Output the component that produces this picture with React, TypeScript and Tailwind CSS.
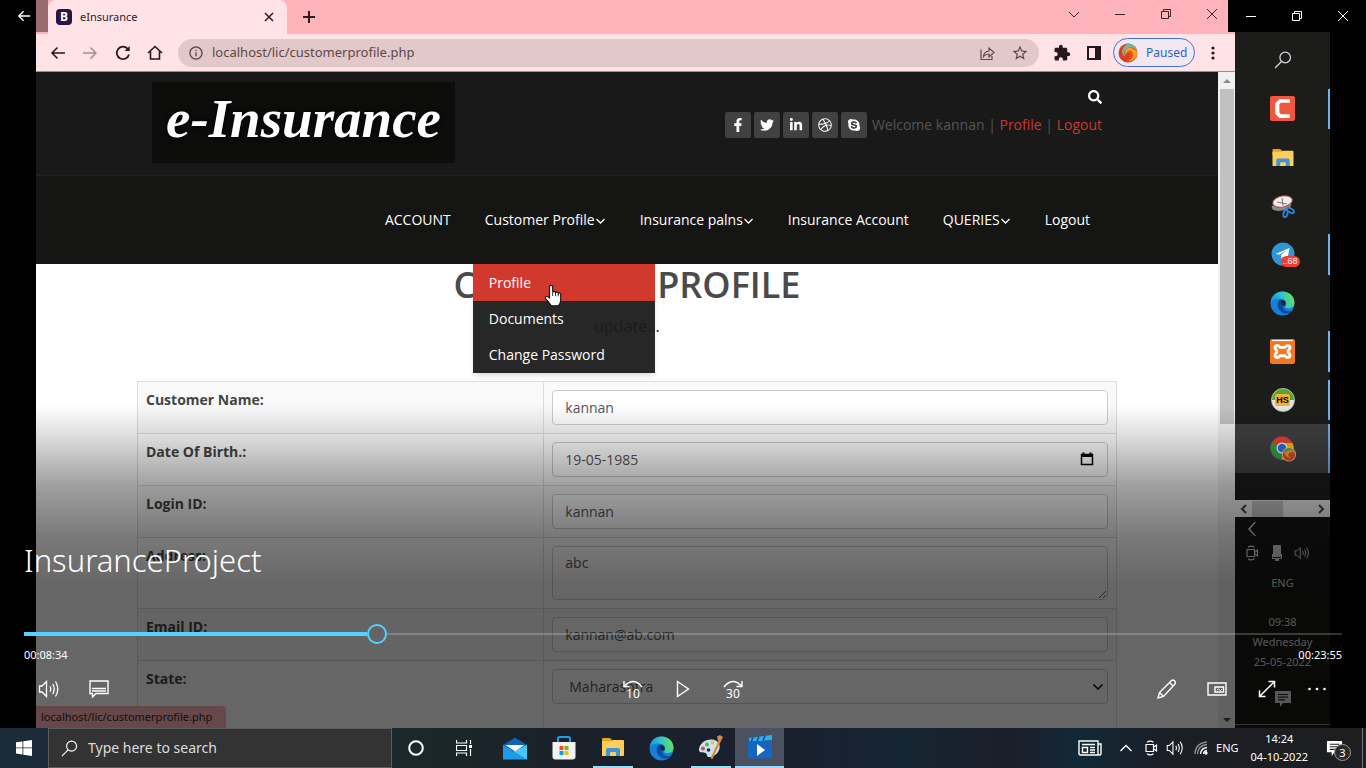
import React, { useState } from "react";
import {
  FaDribbble,
  FaFacebookF,
  FaLinkedinIn,
  FaSearch,
  FaSkype,
  FaTwitter,
} from "react-icons/fa";
import { MdExtension, MdInfoOutline, MdStarBorder } from "react-icons/md";

type IconProps = { className?: string };

function Svg({
  className = "size-5",
  box = "0 0 24 24",
  children,
  width = 1.5,
}: {
  className?: string;
  box?: string;
  width?: number;
  children: React.ReactNode;
}) {
  return (
    <svg className={className} viewBox={box} fill="none" stroke="currentColor" strokeWidth={width} aria-hidden="true">
      {children}
    </svg>
  );
}

/* ---------- shared drawings ---------- */

const ArrowBack = ({ className }: IconProps) => (
  <Svg className={className} box="0 0 16 16">
    <path d="M15 8H2M7.500 2.500L2 8l5.500 5.500" />
  </Svg>
);

const Restore = ({ className }: IconProps) => (
  <Svg className={className} box="0 0 12 12" width={1}>
    <path d="M1.500 3.500h7v7h-7zM3.500 3.500v-2h7v7h-2" />
  </Svg>
);

const Close = ({ className }: IconProps) => (
  <Svg className={className} box="0 0 12 12" width={1}>
    <path d="M1 1l10 10M11 1L1 11" />
  </Svg>
);

const Minimise = ({ className }: IconProps) => (
  <Svg className={className} box="0 0 12 12" width={1}>
    <path d="M1 6.500h10" />
  </Svg>
);

const Lens = ({ className }: IconProps) => (
  <Svg className={className} box="0 0 18 18" width={1.2}>
    <circle cx="11.200" cy="6.500" r="5.300" />
    <path d="M7.500 10.500L1 17" />
  </Svg>
);

const MenuChevron = () => (
  <Svg className="mt-0.5 h-2.5 w-[11px]" box="0 0 11 10" width={1.3}>
    <path d="M1.500 3l4 4 4-4" />
  </Svg>
);

const Speaker = ({ className }: IconProps) => (
  <Svg className={className} box="0 0 22 18" width={1.3}>
    <path d="M1.500 6v6H4l4.500 4.500v-15L4 6zM12 6.200q1.500 2.800 0 5.600M14.800 4q2.800 5 0 10M17.500 1.500q4.600 7.500 0 15" />
  </Svg>
);

const MeetCam = ({ className }: IconProps) => (
  <Svg className={className} box="0 0 14 16" width={1.2}>
    <path d="M2 4.500h7.500v7H2zM9.500 7.200l3-2v5.600l-3-2M3 2.300Q6 0 9.500 2.300M3 13.700Q6 16 9.500 13.700" />
  </Svg>
);

const Folder = ({ className }: IconProps) => (
  <svg className={className} viewBox="0 0 24 22" aria-hidden="true">
    <path d="M1 3q0-1 1-1h7l2 2v4H1z" fill="#e8a317" />
    <path d="M1 5h9l2-1h10q1 0 1 1v14q0 1-1 1H1z" fill="#fccf5c" />
    <path d="M5 20v-6q0-2 2-2h10q2 0 2 2v6h-4v-3q0-1-1-1h-4q-1 0-1 1v3z" fill="#3c93dd" />
  </svg>
);

const Edge = ({ className }: IconProps) => (
  <svg className={className} viewBox="0 0 24 24" aria-hidden="true">
    <defs>
      <linearGradient id="edgeTop" x1="0" y1="0.600" x2="1" y2="0.400">
        <stop offset="0" stopColor="#1b8fdc" />
        <stop offset="0.500" stopColor="#2cc5d2" />
        <stop offset="1" stopColor="#6fe04b" />
      </linearGradient>
    </defs>
    <circle cx="12" cy="12" r="11.500" fill="#1a7fd4" />
    <path d="M.6 11C1.400 4.500 6 .5 12 .5c7 0 11.500 5 11.500 10.500 0 3.500-2.600 5.500-6 5.500-2.800 0-3.600-1.200-2.800-2.400C16.500 10 13 7.200 9 7.200 4.800 7.200 1.500 9 .6 11z" fill="url(#edgeTop)" />
    <path d="M9.500 8.500c-3.500 3-3 10 3 12.500 3 1.200 6.500.6 9-2-3.500 1.200-7.500.2-8.700-3-.8-2 .2-3.200.8-4.200.4-1.800-1.500-3.800-4.100-3.300z" fill="#0b4aa0" />
    <path d="M14.700 14.100c1.500-3-.2-5-2.700-5.900-1 .8-1.400 2.300-.7 4 .6 1.600 1.900 2.300 3.400 1.900z" fill="#16283c" />
  </svg>
);

const Swirl = ({ className }: IconProps) => (
  <svg className={className} viewBox="0 0 20 20" aria-hidden="true">
    <circle cx="10" cy="10" r="9.500" fill="#d9411e" />
    <path d="M10 .5a9.500 9.500 0 0 1 9.400 8C17 4 11 3 7.500 6.500 5.500 9 6 12 8 13.500 3 13 2 5 10 .5z" fill="#6fb8a0" />
    <path d="M19.400 9c0 6-5 10-10 9 4-1 6-4 4.500-7S8 9 8 12C5 8 9 3.500 13.500 5q4 1.500 5.900 4z" fill="#f6a21c" />
    <path d="M10 8c3-1 6 1 5 5-1 3-4 5-6 5 3-2 4.500-5 3-7-1-1.200-2.500-1-4 .5Q8.500 9 10 8z" fill="#f04b23" />
  </svg>
);

const Note = ({ className }: IconProps) => (
  <svg className={className} viewBox="0 0 18 18" aria-hidden="true">
    <path d="M1 1h16v12H9l-3 4v-4H1z" fill="currentColor" />
    <path d="M4 4.500h10M4 7.200h10M4 9.900h7" stroke="#222" strokeWidth="1.200" />
  </svg>
);

/* ---------- browser ---------- */

function TabStrip() {
  return (
    <div className="flex h-[34px] shrink-0 items-stretch bg-[#ffb3ba] pl-3 text-[#2d1b1d]">
      <div className="flex w-[239px] items-center rounded-t-lg bg-[#ffe3e6] pr-2.5 pl-2">
        <span className="flex size-4 items-center justify-center rounded-sm bg-[#2a1740] font-['Open_Sans',sans-serif] text-xs font-bold text-white">
          B
        </span>
        <span className="ml-2 flex-1 text-[11px]">eInsurance</span>
        <button aria-label="Close tab" className="flex size-4 items-center justify-center">
          <Svg className="size-3" box="0 0 12 12" width={1.5}>
            <path d="M2 2l8 8M10 2l-8 8" />
          </Svg>
        </button>
      </div>
      <button aria-label="New tab" className="flex w-11 items-center justify-center">
        <Svg className="size-3.5" box="0 0 14 14" width={2}>
          <path d="M7 1v12M1 7h12" />
        </Svg>
      </button>
      <div className="ml-auto flex h-7 items-center text-[#3c2427]">
        <button aria-label="Search tabs" className="flex w-[46px] justify-center">
          <Svg className="size-3" box="0 0 12 12" width={1}>
            <path d="M1 4l5 5 5-5" />
          </Svg>
        </button>
        <button aria-label="Minimise browser" className="flex w-[46px] justify-center"><Minimise className="size-3" /></button>
        <button aria-label="Restore browser" className="flex w-[46px] justify-center"><Restore className="size-3" /></button>
        <button aria-label="Close browser" className="flex w-[46px] justify-center"><Close className="size-3" /></button>
      </div>
    </div>
  );
}

function Toolbar() {
  return (
    <div className="flex h-[38px] shrink-0 items-center border-b border-[#a08c8f] bg-[#ffe3e6] pr-1 text-[#26191b]">
      <div className="flex w-[142px] items-center justify-between pr-[15px] pl-3.5">
        <button aria-label="Back"><ArrowBack className="size-4" /></button>
        <button aria-label="Forward" className="rotate-180 text-[#a48f92]"><ArrowBack className="size-4" /></button>
        <button aria-label="Reload">
          <Svg className="size-4" box="0 0 16 16" width={1.8}>
            <path d="M14 9.500A6.200 6.200 0 1 1 12.500 3.600L14 5" />
            <path d="M14.700 1v5h-5z" fill="currentColor" stroke="none" />
          </Svg>
        </button>
        <button aria-label="Home">
          <Svg className="size-4" box="0 0 16 16" width={1.6}>
            <path d="M1 8l7-6.500L15 8M3.500 6.500V14h9V6.500" />
          </Svg>
        </button>
      </div>
      <div className="flex h-7 flex-1 items-center rounded-full bg-[#e3c8ca] px-2.5 text-[#5c484b]">
        <MdInfoOutline className="size-4 shrink-0" />
        <input
          aria-label="Address"
          defaultValue="localhost/lic/customerprofile.php"
          className="ml-2 min-w-0 flex-1 bg-transparent text-[13px] outline-none"
        />
        <button aria-label="Share page" className="mr-4">
          <Svg className="size-4" box="0 0 16 16" width={1.2}>
            <path d="M2 4.500V14.500H13V11M4.500 11.500Q5 6.500 10 6V3l5 4.500-5 4.500V9Q6.500 9 4.500 11.500z" />
          </Svg>
        </button>
        <button aria-label="Bookmark"><MdStarBorder className="size-[18px]" /></button>
      </div>
      <button aria-label="Extensions" className="ml-3.5"><MdExtension className="size-[18px]" /></button>
      <button aria-label="Side panel" className="ml-4">
        <Svg className="size-3.5" box="0 0 14 14" width={2}>
          <path d="M1 1h12v12H1z" />
          <path d="M9 1h4v12H9z" fill="currentColor" />
        </Svg>
      </button>
      <button className="ml-3 flex h-[29px] w-[82px] items-center rounded-full border border-[#3f74cf] bg-[#f1e8f3] pl-1 text-xs text-[#2f65bd]">
        <Swirl className="size-5" />
        <span className="ml-2">Paused</span>
      </button>
      <button aria-label="Menu" className="flex w-9 justify-center">
        <svg className="size-4" viewBox="0 0 16 16" fill="currentColor" aria-hidden="true">
          <circle cx="8" cy="3" r="1.600" /><circle cx="8" cy="8" r="1.600" /><circle cx="8" cy="13" r="1.600" />
        </svg>
      </button>
    </div>
  );
}

const social = [
  { name: "Facebook", Icon: FaFacebookF },
  { name: "Twitter", Icon: FaTwitter },
  { name: "LinkedIn", Icon: FaLinkedinIn },
  { name: "Dribbble", Icon: FaDribbble },
  { name: "Skype", Icon: FaSkype },
];

function SiteHeader() {
  return (
    <header className="h-[104px] border-b border-[#222] bg-[#191919]">
      <div className="mx-auto flex w-[950px] max-w-full items-start justify-between pt-2.5">
        <a
          href="#home"
          className="flex h-[81px] w-[303px] items-center justify-center bg-[#0d0d0c] pb-2 font-['Liberation_Serif',serif] text-[55px] leading-none font-bold text-white italic [text-shadow:0_0_6px_#000]"
        >
          e-Insurance
        </a>
        <div className="flex flex-col items-end">
          <button aria-label="Search site" className="mt-2 text-white"><FaSearch className="size-3.5" /></button>
          <div className="mt-2 flex items-center gap-[3px] text-sm text-[#555]">
            {social.map(({ name, Icon }) => (
              <a key={name} href="#social" aria-label={name} className="flex size-[26px] items-center justify-center rounded-xs bg-[#414141] text-white">
                <Icon className="size-3.5" />
              </a>
            ))}
            <span className="ml-0.5">
              Welcome kannan | <a href="#profile" className="text-[#cd3630]">Profile</a> |{" "}
              <a href="#logout" className="text-[#cd3630]">Logout</a>
            </span>
          </div>
        </div>
      </div>
    </header>
  );
}

function HandPointer() {
  return (
    <svg className="absolute top-5 left-[71px] h-6 w-[18px]" viewBox="0 0 18 24" aria-hidden="true">
      <path
        d="M5.500 14V3q0-1.800 1.600-1.800T8.700 3v5.500q.3-1.200 1.500-1.100 1.200.1 1.400 1.300.5-.9 1.500-.7 1.100.2 1.200 1.400.5-.7 1.400-.4 1 .3 1 1.600v5q0 3.500-2.200 6.100H7.300Q5.200 18.300 1.800 14.800q-.9-1.300.2-2 1-.6 2 .1z"
        fill="#fff"
        stroke="#111"
        strokeWidth="1.100"
      />
      <path d="M8.700 8.500V12M11.600 9v3.200M14.300 9.800v2.600" stroke="#111" strokeWidth="0.900" />
    </svg>
  );
}

function SiteNav() {
  return (
    <nav className="h-[88px] bg-[#151514] text-sm text-white">
      <ul className="mx-auto flex h-full w-[950px] max-w-full items-center justify-end gap-[34px] pr-3">
        <li><a href="#account">ACCOUNT</a></li>
        <li className="relative flex h-full items-center">
          <a href="#customer" className="flex items-center">Customer Profile<MenuChevron /></a>
          <ul className="absolute top-full -left-3 z-10 w-[182px] bg-[#1b1b1b]/95 shadow-md">
            <li className="relative flex h-[37px] items-center bg-[#d1382e] px-4">
              <a href="#profile">Profile</a>
              <HandPointer />
            </li>
            <li className="flex h-9 items-center px-4"><a href="#documents">Documents</a></li>
            <li className="flex h-9 items-center px-4"><a href="#password">Change Password</a></li>
          </ul>
        </li>
        <li><a href="#plans" className="flex items-center">Insurance palns<MenuChevron /></a></li>
        <li><a href="#insurance">Insurance Account</a></li>
        <li><a href="#queries" className="flex items-center">QUERIES<MenuChevron /></a></li>
        <li><a href="#logout">Logout</a></li>
      </ul>
    </nav>
  );
}

const field = "block h-[35px] w-full rounded-sm border border-[#ccc] bg-white px-3 text-sm text-[#555] outline-none";

function FormRow({ id, label, shaded, children }: { id: string; label: string; shaded?: boolean; children: React.ReactNode }) {
  return (
    <tr className={shaded ? "bg-[#f9f9f9]" : "bg-white"}>
      <th scope="row" className="w-[41.5%] border border-[#ddd] p-2 text-left align-top text-sm font-bold text-[#444]">
        <label htmlFor={id}>{label}</label>
      </th>
      <td className="border border-[#ddd] p-2 align-top">{children}</td>
    </tr>
  );
}

function CustomerProfile() {
  return (
    <main className="mx-auto w-[980px] max-w-full">
      <h1 className="text-center text-4xl leading-[42px] font-semibold text-[#4a4a4a]">CUSTOMER PROFILE</h1>
      <p className="mt-2.5 mb-[45px] text-center text-base leading-5 text-[#222]">update...</p>
      <table className="w-full border-collapse">
        <tbody>
          <FormRow id="name" label="Customer Name:" shaded>
            <input id="name" defaultValue="kannan" className={field} />
          </FormRow>
          <FormRow id="dob" label="Date Of Birth.:">
            <div className="relative">
              <input id="dob" defaultValue="19-05-1985" className={field} />
              <button aria-label="Choose date" className="absolute top-2.5 right-3.5 text-black">
                <Svg className="size-3.5" box="0 0 14 14" width={1.5}>
                  <path d="M1.500 2.500h11v10h-11z" />
                  <path d="M1.500 4h11M3.500 0.500v2M10.500 0.500v2" strokeWidth="2" />
                </Svg>
              </button>
            </div>
          </FormRow>
          <FormRow id="login" label="Login ID:" shaded>
            <input id="login" defaultValue="kannan" className={field} />
          </FormRow>
          <FormRow id="address" label="Address:">
            <textarea
              id="address"
              defaultValue="abc"
              className="block h-[54px] w-full rounded-sm border border-[#ccc] bg-white px-3 py-1.5 text-sm text-[#555] outline-none"
            />
          </FormRow>
          <FormRow id="email" label="Email ID:" shaded>
            <input id="email" defaultValue="kannan@ab.com" className={field} />
          </FormRow>
          <FormRow id="state" label="State:">
            <div className="relative pb-10">
              <select id="state" className="block h-[35px] w-full appearance-none rounded-sm border border-[#ccc] bg-white px-4 text-sm text-[#555] outline-none">
                <option>Maharashtra</option>
              </select>
              <Svg className="pointer-events-none absolute top-3 right-1 size-3 text-black" box="0 0 12 12">
                <path d="M1.500 3.500L6 8l4.500-4.500" />
              </Svg>
            </div>
          </FormRow>
        </tbody>
      </table>
    </main>
  );
}

function PageScrollbar() {
  return (
    <div className="flex w-[17px] shrink-0 flex-col items-center bg-[#f1f1f1]">
      <svg className="h-[17px] w-2" viewBox="0 0 8 17" aria-hidden="true"><path d="M0 11l4-4 4 4z" fill="#8b8b8b" /></svg>
      <div className="h-[51%] w-[14px] bg-[#c1c1c1]" />
      <svg className="mt-auto h-[17px] w-2" viewBox="0 0 8 17" aria-hidden="true"><path d="M0 7l4 4 4-4z" fill="#444" /></svg>
    </div>
  );
}

function Browser() {
  return (
    <section className="flex min-w-0 flex-1 flex-col">
      <TabStrip />
      <Toolbar />
      <div className="relative flex min-h-0 flex-1">
        <div className="min-w-0 flex-1 overflow-hidden bg-white font-['Open_Sans',sans-serif]">
          <SiteHeader />
          <SiteNav />
          <CustomerProfile />
        </div>
        <PageScrollbar />
        <div className="absolute bottom-0 left-0 rounded-tr-sm bg-[#ffb3ba] pr-3.5 pl-[5px] text-[11px] leading-[22px] text-[#3c2427]">
          localhost/lic/customerprofile.php
        </div>
      </div>
    </section>
  );
}

/* ---------- vertical taskbar inside the video ---------- */

const sideApps: { name: string; open?: boolean; active?: boolean; icon: React.ReactNode }[] = [
  { name: "Search", icon: <Lens className="size-[18px]" /> },
  {
    name: "Camtasia",
    open: true,
    icon: (
      <svg className="size-[25px]" viewBox="0 0 24 24" aria-hidden="true">
        <rect width="24" height="24" rx="2" fill="#f1573f" />
        <path d="M19 3H9L5 7v10l4 4h10v-3.500h-8.500L9 16V8l1.500-1.500H19z" fill="#fff" />
      </svg>
    ),
  },
  { name: "File Explorer", icon: <Folder className="h-[21px] w-6" /> },
  {
    name: "Snipping Tool",
    icon: (
      <svg className="size-6" viewBox="0 0 24 24" aria-hidden="true">
        <ellipse cx="10.500" cy="12" rx="10" ry="4.500" fill="#8b8b8b" transform="rotate(-12 10.500 12)" />
        <ellipse cx="11.500" cy="7.500" rx="10" ry="5.500" fill="#eee" stroke="#b94040" transform="rotate(-12 11.500 7.500)" />
        <path d="M6 8l10 2M11 4l1 8" stroke="#777" />
        <ellipse cx="14.500" cy="19.500" rx="2" ry="3.800" fill="none" stroke="#2f86d8" strokeWidth="1.800" transform="rotate(15 14.500 19.500)" />
        <ellipse cx="19.500" cy="16.500" rx="2" ry="3.800" fill="none" stroke="#2f86d8" strokeWidth="1.800" transform="rotate(-60 19.500 16.500)" />
      </svg>
    ),
  },
  {
    name: "Telegram",
    open: true,
    icon: (
      <span className="relative">
        <svg className="size-6" viewBox="0 0 24 24" aria-hidden="true">
          <circle cx="12" cy="12" r="11.500" fill="#2f96d5" />
          <path d="M4.500 12L18.500 6l-2.200 12-4.300-3.200-2 2v-3.800l6-5-7.500 4.500z" fill="#fff" />
        </svg>
        <span className="absolute top-3.5 left-2.5 rounded-md bg-[#f23c34] px-0.5 font-['Liberation_Sans',sans-serif] text-[9px] leading-[11px] text-white">..68</span>
      </span>
    ),
  },
  { name: "Edge", icon: <Edge className="size-[25px]" /> },
  {
    name: "XAMPP",
    open: true,
    icon: (
      <svg className="size-[25px]" viewBox="0 0 24 24" aria-hidden="true">
        <rect width="24" height="24" rx="2" fill="#f6781d" />
        <path d="M2 1.500h20" stroke="#fff" />
        <g fill="none" stroke="#fff" strokeWidth="2.800" strokeLinejoin="round">
          <path d="M6 10.500Q3.500 8 6 6.500 8 5.500 9.500 8h5Q16 5.500 18 6.500q2.500 1.500 0 4-1.200 1.500 0 3 2.500 2.500 0 4-2 1-3.500-1.500h-5Q8 18.500 6 17.500q-2.500-1.500 0-4 1.200-1.500 0-3z" />
        </g>
      </svg>
    ),
  },
  {
    name: "HeidiSQL",
    open: true,
    icon: (
      <span className="flex size-6 items-center justify-center rounded-full border border-[#b9c4a8] bg-linear-to-b from-[#55a630] from-50% to-[#e4e4e4] to-50%">
        <span className="rounded-xs bg-[#f5b02d] px-px font-['Liberation_Sans',sans-serif] text-[9px] leading-3 font-bold text-black">HS</span>
      </span>
    ),
  },
  {
    name: "Chrome",
    open: true,
    active: true,
    icon: (
      <svg className="size-[26px]" viewBox="0 0 26 26" aria-hidden="true">
        <circle cx="12" cy="12" r="11.500" fill="#e94335" />
        <path d="M12 12L2 6.300A11.500 11.500 0 0 0 11 23.500l5.500-9z" fill="#31a350" />
        <path d="M12 7h10.500A11.500 11.500 0 0 1 11 23.500L17 14z" fill="#fbc116" />
        <circle cx="12" cy="12" r="5.500" fill="#fff" />
        <circle cx="12" cy="12" r="4.300" fill="#2f73e0" />
        <circle cx="19" cy="18.500" r="7" fill="#e8d5c8" />
        <circle cx="19" cy="18.500" r="6.200" fill="#e2481f" />
        <path d="M14 15q6-6 11 2-4-2-6 0-2 3 2 5-6 0-7-7z" fill="#f3a424" />
        <path d="M14 15q5-6 10 0-5-2-8 1z" fill="#5ba86a" />
      </svg>
    ),
  },
];

function SideTaskbar() {
  return (
    <aside className="flex w-[95px] shrink-0 flex-col bg-[#1c1c1b] pt-9 text-[#d8d8d8]">
      <ul className="grid h-[437px] grid-rows-9">
        {sideApps.map((app) => (
          <li key={app.name} className={app.active ? "flex bg-[#404040]" : "flex"}>
            <button aria-label={app.name} className="flex flex-1 items-center justify-center">{app.icon}</button>
            {app.open && <span className={app.active ? "-ml-0.5 w-0.5 bg-[#6cb5f5]" : "my-1 -ml-0.5 w-0.5 bg-[#6cb5f5]"} />}
          </li>
        ))}
      </ul>
      <div className="mt-[27px] flex h-[17px] items-center justify-between bg-[#f1f1f1] px-1 text-[#444]">
        <Svg className="size-2.5" box="0 0 10 10" width={2}><path d="M7 1L3 5l4 4" /></Svg>
        <span className="mr-auto ml-[3px] h-4 w-[31px] bg-[#c6c6c6]" />
        <Svg className="size-2.5" box="0 0 10 10" width={2}><path d="M3 1l4 4-4 4" /></Svg>
      </div>
      <div className="flex flex-1 flex-col items-center bg-[#161615] text-[11px]">
        <Svg className="mt-1 mr-auto ml-2.5 size-4" box="0 0 14 14" width={1.2}><path d="M9 1L3.500 7 9 13" /></Svg>
        <div className="mt-2 flex w-full items-center justify-between pr-5 pl-2.5">
          <MeetCam className="h-4 w-3.5" />
          <svg className="h-4 w-3" viewBox="0 0 12 16" fill="#ccc" aria-hidden="true">
            <path d="M3 0h6q1 0 1 1v11H2V1q0-1 1-1zM1 9h1v4h8V9h1v5H8v2H4v-2H1z" />
          </svg>
          <Speaker className="h-3.5 w-4" />
        </div>
        <span className="mt-3 leading-5">ENG</span>
        <span className="mt-[19px] leading-5">09:38</span>
        <span className="leading-5">Wednesday</span>
        <span className="leading-5">25-05-2022</span>
        <Note className="mt-[18px] size-[18px]" />
        <span className="mt-4 h-px w-full bg-[#888]" />
      </div>
    </aside>
  );
}

/* ---------- player overlay ---------- */

function Jump({ seconds, forward }: { seconds: number; forward?: boolean }) {
  return (
    <button aria-label={forward ? "Skip forward" : "Skip back"} className="flex h-12 w-[50px] flex-col items-center justify-center">
      <Svg className={forward ? "h-2 w-5" : "h-2 w-5 -scale-x-100"} box="0 0 20 8" width={1.4}>
        <path d="M1 7Q9.500-3.500 18.500 6M19 1v5.500h-5.500" />
      </Svg>
      <span className="text-xs leading-[11px]">{seconds}</span>
    </button>
  );
}

const control = "flex h-12 w-[50px] items-center justify-center";

function PlayerOverlay() {
  const [position, setPosition] = useState(264);
  return (
    <>
      <button aria-label="Back" className="absolute top-0 left-0 flex h-8 w-12 items-center justify-center bg-black/40 text-white">
        <ArrowBack className="size-3.5" />
      </button>
      <div className="absolute top-0 right-0 flex h-8 bg-black text-white">
        <button aria-label="Minimise" className="flex w-[46px] items-center justify-center"><Minimise className="size-3" /></button>
        <button aria-label="Restore" className="flex w-[46px] items-center justify-center"><Restore className="size-3" /></button>
        <button aria-label="Close" className="flex w-[46px] items-center justify-center"><Close className="size-3" /></button>
      </div>
      <div className="absolute inset-x-0 bottom-0 flex h-[323px] flex-col justify-end bg-[linear-gradient(to_bottom,transparent_0,rgba(0,0,0,0.13)_30px,rgba(0,0,0,0.37)_79px,rgba(0,0,0,0.52)_131px,rgba(0,0,0,0.6)_180px)] px-6 pb-[15px] text-white">
        <h2 className="text-[31px] leading-[46px] font-light">InsuranceProject</h2>
        <div className="relative mt-[41px] flex h-5 items-center">
          <div className="h-1 bg-[#55d0ff]" style={{ width: `calc((100% - 20px) * ${position / 1000})` }} />
          <span className="size-5 rounded-full border-2 border-[#55d0ff]" />
          <div className="h-0.5 flex-1 bg-white/20" />
          <input
            type="range"
            aria-label="Seek"
            min={0}
            max={1000}
            value={position}
            onChange={(e) => setPosition(Number(e.target.value))}
            className="absolute inset-0 w-full cursor-pointer opacity-0"
          />
        </div>
        <div className="mt-0.5 flex justify-between text-[11px] leading-[18px]">
          <span>00:08:34</span>
          <span>00:23:55</span>
        </div>
        <div className="mt-px grid grid-cols-3">
          <div className="flex">
            <button aria-label="Volume" className={control}><Speaker className="h-[18px] w-[22px]" /></button>
            <button aria-label="Subtitles" className={control}>
              <Svg className="h-[18px] w-5" box="0 0 20 18" width={1.4}>
                <path d="M1 1h18v12.500H7L3.500 17v-3.500H1zM3 8.500h14M3 11h14" />
              </Svg>
            </button>
          </div>
          <div className="flex justify-center">
            <Jump seconds={10} />
            <button aria-label="Play" className={control}>
              <Svg className="h-[18px] w-3.5" box="0 0 14 18" width={1.4}><path d="M1.500 1.500v15L12.500 9z" /></Svg>
            </button>
            <Jump seconds={30} forward />
          </div>
          <div className="flex justify-end">
            <button aria-label="Edit" className={control}>
              <Svg className="size-5" box="0 0 20 20" width={1.4}>
                <path d="M1 19l1.500-5.500L14.500 1.500q1.500-1.200 3 .3t.5 3.200L6.500 17.500zM12.500 3.500l4 4M2.500 13.500l4 4" />
              </Svg>
            </button>
            <button aria-label="Mini view" className={control}>
              <Svg className="h-3.5 w-5" box="0 0 20 14" width={1.4}>
                <path d="M1 1h18v12H1zM8 5h8.500v5H8z" />
                <path d="M10 8l1.500-1 2 1.500 1.500-1.500" strokeWidth="1" />
              </Svg>
            </button>
            <button aria-label="Full screen" className={control}>
              <Svg className="size-[18px]" box="0 0 18 18"><path d="M1.500 16.500l15-15M10.500 1.500h6v6M1.500 10.500v6h6" /></Svg>
            </button>
            <button aria-label="More" className={control}>
              <svg className="h-1 w-[18px]" viewBox="0 0 18 4" fill="currentColor" aria-hidden="true">
                <circle cx="1.500" cy="2" r="1.300" /><circle cx="9" cy="2" r="1.300" /><circle cx="16.500" cy="2" r="1.300" />
              </svg>
            </button>
          </div>
        </div>
      </div>
    </>
  );
}

/* ---------- desktop taskbar ---------- */

const pinned: { name: string; open?: boolean; active?: boolean; icon: React.ReactNode }[] = [
  {
    name: "Mail",
    icon: (
      <svg className="h-[23px] w-6" viewBox="0 0 24 23" aria-hidden="true">
        <path d="M0 8L12 .5 24 8v5H0z" fill="#0f62b4" />
        <path d="M0 8l12 7 12-7v14.500H0z" fill="#1b9be8" />
        <path d="M24 8v14.500L11 14.500z" fill="#45c8f5" />
        <path d="M2.500 8h19L12 14.500z" fill="#f3f6fa" />
      </svg>
    ),
  },
  {
    name: "Microsoft Store",
    icon: (
      <svg className="size-6" viewBox="0 0 24 24" aria-hidden="true">
        <path d="M6 6V2.500q0-1.500 1.500-1.500h9Q18 1 18 2.500V6" fill="none" stroke="#1ba1e2" strokeWidth="2" />
        <path d="M.5 6h23v14.500q0 3-3 3h-17q-3 0-3-3z" fill="#f2f2f2" />
        <path d="M7.500 10H11.500v4H7.500z" fill="#f25022" /><path d="M12.500 10h4v4h-4z" fill="#7fba00" />
        <path d="M7.500 15h4v4h-4z" fill="#00a4ef" /><path d="M12.500 15h4v4h-4z" fill="#ffb900" />
      </svg>
    ),
  },
  { name: "File Explorer", open: true, icon: <Folder className="h-[22px] w-6" /> },
  { name: "Edge", icon: <Edge className="size-[25px]" /> },
  {
    name: "Paint",
    open: true,
    icon: (
      <svg className="size-[25px]" viewBox="0 0 25 25" aria-hidden="true">
        <path d="M1 15C1 9 7 4 14 4.500c6 .5 8.500 5 7.500 9-1.500 6-7 9-11 8.500-2-.3-1-3-3-4S1 18.500 1 15z" fill="#c9e2f3" />
        <circle cx="5" cy="13.500" r="2" fill="#e34a3c" /><circle cx="9" cy="9.500" r="2" fill="#54b948" />
        <circle cx="14.500" cy="7.500" r="1.900" fill="#f2c230" /><circle cx="10.500" cy="15" r="1.800" fill="#1c2733" />
        <path d="M21 5l2 1-8.500 18q-2 0-2-1z" fill="#e08a2e" />
        <path d="M19 1.500l3-1.500 3 2-2 4h-3z" fill="#c98b52" />
      </svg>
    ),
  },
  {
    name: "Movies & TV",
    open: true,
    active: true,
    icon: (
      <svg className="size-6" viewBox="0 0 24 24" aria-hidden="true">
        <path d="M1 3l23-3v5L1 7z" fill="#2bb1ee" />
        <path d="M5 2.500L3 7M11 1.700L9 6M17 .9l-2 5" stroke="#0d4f9e" strokeWidth="1.500" />
        <path d="M0 6h24v16q0 1.500-1.500 1.500h-21Q0 23.500 0 22z" fill="#1566c0" />
        <path d="M9 9l8 6-8 6z" fill="#fff" />
      </svg>
    ),
  },
];

function Taskbar() {
  return (
    <footer className="flex h-10 shrink-0 items-stretch bg-[linear-gradient(to_right,#1b2b38_0%,#1a282b_30%,#1a2129_42%,#1b1f2e_56%,#152532_66%,#1b1e2a_74%,#122837_79%,#1b1e25_86%,#1e1e20_100%)] text-white">
      <button aria-label="Start" className="flex w-12 items-center justify-center">
        <svg className="size-4" viewBox="0 0 16 16" fill="currentColor" aria-hidden="true">
          <path d="M0 2.300L6.500 1.400v6.100H0zM7.300 1.300L16 0v7.500H7.300zM0 8.300h6.500v6.200L0 13.600zM7.300 8.300H16V16l-8.700-1.300z" />
        </svg>
      </button>
      <div className="flex w-[344px] items-center border border-[#5c5c5c] bg-[#333] px-3">
        <Lens className="size-[17px]" />
        <input aria-label="Search" placeholder="Type here to search" className="ml-2.5 min-w-0 flex-1 bg-transparent text-sm outline-none placeholder:text-[#dcdcdc]" />
      </div>
      <button aria-label="Cortana" className="flex w-12 items-center justify-center">
        <Svg className="size-4" box="0 0 16 16" width={2}><circle cx="8" cy="8" r="6.800" /></Svg>
      </button>
      <button aria-label="Task view" className="flex w-12 items-center justify-center">
        <Svg className="size-4" box="0 0 16 16" width={1.2}>
          <path d="M.5 0v3h10V0M.5 5.500h10v5H.5zM.5 16v-3h10v3M14.500 0v4M14.500 9v7" />
          <path d="M13 5h3v3h-3z" fill="currentColor" stroke="none" />
        </Svg>
      </button>
      <div className="ml-0.5 flex">
        {pinned.map((app) => (
          <button
            key={app.name}
            aria-label={app.name}
            className={app.active ? "flex w-[49px] flex-col items-center bg-[#4b5160]" : "flex w-[49px] flex-col items-center"}
          >
            <span className="flex flex-1 items-center">{app.icon}</span>
            {app.open && <span className={app.active ? "h-0.5 w-full bg-[#9adcf8]" : "h-0.5 w-10 bg-[#9adcf8]"} />}
          </button>
        ))}
      </div>
      <div className="ml-auto flex items-center">
        <button aria-label="News" className="mr-[18px]">
          <Svg className="h-4 w-6" box="0 0 24 16" width={1.4}>
            <path d="M1 1h19v14H2.500Q1 15 1 13.500zM20 4h3v9.500q0 1.500-1.500 1.500H20M4 4.500h13M12 7.500h5M12 10h5M12 12.500h5M4.500 7.500h5v5h-5z" />
          </Svg>
        </button>
        <button aria-label="Show hidden icons" className="mr-3">
          <Svg className="size-3" box="0 0 12 12" width={1.3}><path d="M.5 9L6 3.500 11.500 9" /></Svg>
        </button>
        <MeetCam className="mr-2 h-4 w-3.5" />
        <Speaker className="mr-2.5 h-4 w-[18px]" />
        <Svg className="mr-2 size-3.5" box="0 0 14 14" width={1.3}>
          <path d="M9.500 13q0-3 3.500-3.500M6.500 13q.5-6 6.500-6.500" />
          <path d="M3.500 13Q4 4.500 13 3.500M.8 13Q1.500 2 13 .8" opacity="0.500" />
          <circle cx="12" cy="12" r="1" fill="currentColor" />
        </Svg>
        <span className="mr-3 text-[11px]">ENG</span>
        <div className="mr-[18px] text-center text-[11px] leading-[18px]">
          <div>14:24</div>
          <div>04-10-2022</div>
        </div>
        <button aria-label="Notifications" className="relative mr-3 h-6 w-6">
          <Note className="absolute top-1 left-0 size-[17px]" />
          <span className="absolute top-2 left-2 flex size-[17px] items-center justify-center rounded-full border border-[#999] bg-[#2a2a2c] text-[11px] leading-none">3</span>
        </button>
        <span className="mr-[3px] h-10 w-px bg-[#777]" />
      </div>
    </footer>
  );
}

export default function App() {
  return (
    <div className="flex h-screen flex-col overflow-hidden bg-black font-['Noto_Sans',sans-serif]">
      <div className="relative flex min-h-0 flex-1 px-9">
        <Browser />
        <SideTaskbar />
        <PlayerOverlay />
      </div>
      <Taskbar />
    </div>
  );
}
